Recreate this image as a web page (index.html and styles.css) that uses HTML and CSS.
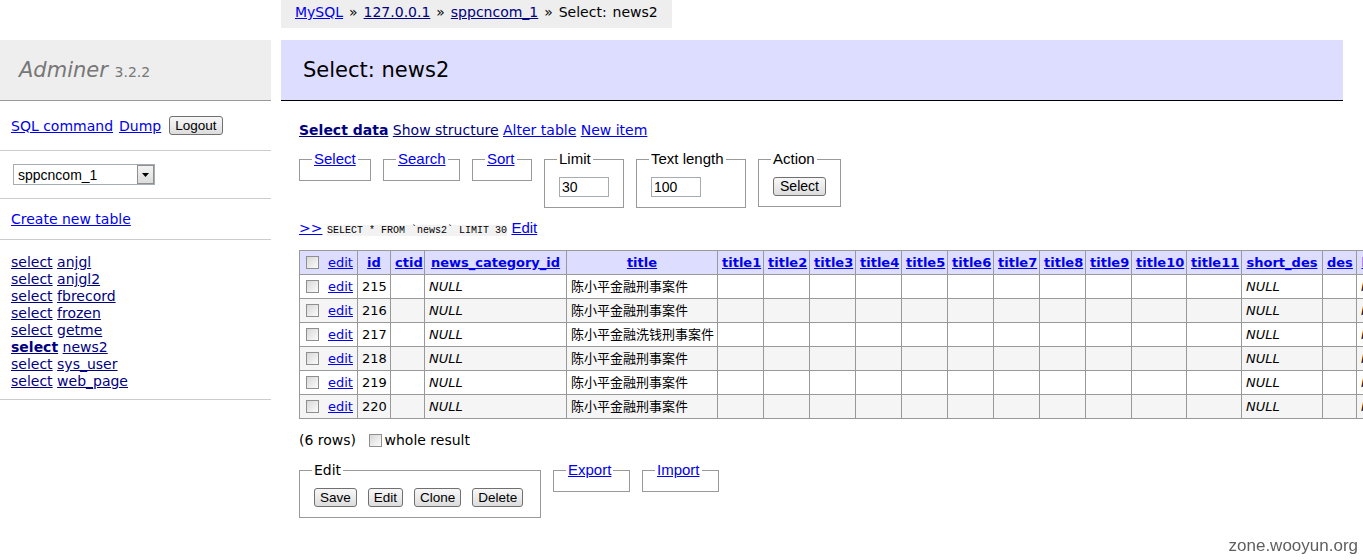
FILE: index.html
```html
<!DOCTYPE html>
<html lang="en">
<head>
<meta charset="utf-8">
<title>Select: news2 - Adminer</title>
<link rel="stylesheet" href="styles.css">
</head>
<body>
<nav class="menu">
  <h1 class="brand"><span class="brand-name">Adminer</span> <span class="version">3.2.2</span></h1>
  <p class="menu-sec links-row"><a href="#">SQL command</a><a href="#">Dump</a><button class="btn logout" type="button">Logout</button></p>
  <p class="menu-sec db-row"><span class="dbselect"><select class="dbselect-input"><option>sppcncom_1</option></select><span class="dbselect-arrow"><svg width="7" height="4" viewBox="0 0 7 4"><path d="M0 0h7L3.5 4z" fill="#000"/></svg></span></span></p>
  <p class="menu-sec"><a href="#">Create new table</a></p>
  <div class="menu-sec table-list">
    <div><a class="v" href="#">select</a> <a class="v" href="#">anjgl</a></div>
    <div><a class="v" href="#">select</a> <a class="v" href="#">anjgl2</a></div>
    <div><a class="v" href="#">select</a> <a class="v" href="#">fbrecord</a></div>
    <div><a class="v" href="#">select</a> <a class="v" href="#">frozen</a></div>
    <div><a class="v" href="#">select</a> <a class="v" href="#">getme</a></div>
    <div><a class="v active" href="#">select</a> <a class="v" href="#">news2</a></div>
    <div><a class="v" href="#">select</a> <a class="v" href="#">sys_user</a></div>
    <div><a class="v" href="#">select</a> <a class="v" href="#">web_page</a></div>
  </div>
</nav>

<main class="main">
  <p class="breadcrumb"><a href="#">MySQL</a> » <a class="v" href="#">127.0.0.1</a> » <a class="v" href="#">sppcncom_1</a> » Select: news2</p>
  <h1 class="page-title">Select: news2</h1>

  <div class="content">
    <p class="tabs"><a class="v current" href="#">Select data</a> <a class="v" href="#">Show structure</a> <a href="#">Alter table</a> <a href="#">New item</a></p>

    <div class="filters">
      <fieldset class="box w-select"><legend><a href="#">Select</a></legend></fieldset>
      <fieldset class="box w-search"><legend><a href="#">Search</a></legend></fieldset>
      <fieldset class="box w-sort"><legend><a href="#">Sort</a></legend></fieldset>
      <fieldset class="box w-limit"><legend>Limit</legend><div class="fs-body"><input class="num" type="text" value="30"></div></fieldset>
      <fieldset class="box w-textlen"><legend>Text length</legend><div class="fs-body"><input class="num" type="text" value="100"></div></fieldset>
      <fieldset class="box w-action"><legend>Action</legend><div class="fs-body"><button class="btn" type="button">Select</button></div></fieldset>
    </div>

    <p class="sql"><a href="#" class="sql-go">&gt;&gt;</a> <code class="sql-code">SELECT * FROM `news2` LIMIT 30</code> <a href="#" class="sql-edit">Edit</a></p>

    <table class="grid">
      <colgroup>
        <col class="c-chk"><col class="c-id"><col class="c-ctid"><col class="c-nci"><col class="c-title">
        <col class="c-t"><col class="c-t"><col class="c-t"><col class="c-t"><col class="c-t"><col class="c-t"><col class="c-t"><col class="c-t"><col class="c-t">
        <col class="c-t2"><col class="c-t2"><col class="c-short"><col class="c-des"><col class="c-extra"><col class="c-extra">
      </colgroup>
      <thead>
        <tr>
          <td class="chk-cell"><input type="checkbox" class="cb"><a href="#">edit</a></td>
          <th><a href="#">id</a></th>
          <th><a href="#">ctid</a></th>
          <th><a href="#">news_category_id</a></th>
          <th><a href="#">title</a></th>
          <th><a href="#">title1</a></th>
          <th><a href="#">title2</a></th>
          <th><a href="#">title3</a></th>
          <th><a href="#">title4</a></th>
          <th><a href="#">title5</a></th>
          <th><a href="#">title6</a></th>
          <th><a href="#">title7</a></th>
          <th><a href="#">title8</a></th>
          <th><a href="#">title9</a></th>
          <th><a href="#">title10</a></th>
          <th><a href="#">title11</a></th>
          <th><a href="#">short_des</a></th>
          <th><a href="#">des</a></th>
          <th><a href="#">keywords</a></th>
          <th><a href="#">content</a></th>
        </tr>
      </thead>
      <tbody>
        <tr>
          <td class="chk-cell"><input type="checkbox" class="cb"><a href="#">edit</a></td>
          <td>215</td><td></td><td><i>NULL</i></td><td>陈小平金融刑事案件</td>
          <td></td><td></td><td></td><td></td><td></td><td></td><td></td><td></td><td></td><td></td><td></td>
          <td><i>NULL</i></td><td></td><td><i>NULL</i></td><td><i>NULL</i></td>
        </tr>
        <tr class="odd">
          <td class="chk-cell"><input type="checkbox" class="cb"><a href="#">edit</a></td>
          <td>216</td><td></td><td><i>NULL</i></td><td>陈小平金融刑事案件</td>
          <td></td><td></td><td></td><td></td><td></td><td></td><td></td><td></td><td></td><td></td><td></td>
          <td><i>NULL</i></td><td></td><td><i>NULL</i></td><td><i>NULL</i></td>
        </tr>
        <tr>
          <td class="chk-cell"><input type="checkbox" class="cb"><a href="#">edit</a></td>
          <td>217</td><td></td><td><i>NULL</i></td><td>陈小平金融洗钱刑事案件</td>
          <td></td><td></td><td></td><td></td><td></td><td></td><td></td><td></td><td></td><td></td><td></td>
          <td><i>NULL</i></td><td></td><td><i>NULL</i></td><td><i>NULL</i></td>
        </tr>
        <tr class="odd">
          <td class="chk-cell"><input type="checkbox" class="cb"><a href="#">edit</a></td>
          <td>218</td><td></td><td><i>NULL</i></td><td>陈小平金融刑事案件</td>
          <td></td><td></td><td></td><td></td><td></td><td></td><td></td><td></td><td></td><td></td><td></td>
          <td><i>NULL</i></td><td></td><td><i>NULL</i></td><td><i>NULL</i></td>
        </tr>
        <tr>
          <td class="chk-cell"><input type="checkbox" class="cb"><a href="#">edit</a></td>
          <td>219</td><td></td><td><i>NULL</i></td><td>陈小平金融刑事案件</td>
          <td></td><td></td><td></td><td></td><td></td><td></td><td></td><td></td><td></td><td></td><td></td>
          <td><i>NULL</i></td><td></td><td><i>NULL</i></td><td><i>NULL</i></td>
        </tr>
        <tr class="odd">
          <td class="chk-cell"><input type="checkbox" class="cb"><a href="#">edit</a></td>
          <td>220</td><td></td><td><i>NULL</i></td><td>陈小平金融刑事案件</td>
          <td></td><td></td><td></td><td></td><td></td><td></td><td></td><td></td><td></td><td></td><td></td>
          <td><i>NULL</i></td><td></td><td><i>NULL</i></td><td><i>NULL</i></td>
        </tr>
      </tbody>
    </table>

    <p class="rows-line">(6 rows) <label class="whole"><input type="checkbox" class="cb cb-whole">whole result</label></p>

    <div class="actions">
      <fieldset class="box w-edit edit-fs"><legend>Edit</legend><div class="fs-body btn-row"><button class="btn" type="button">Save</button><button class="btn" type="button">Edit</button><button class="btn" type="button">Clone</button><button class="btn" type="button">Delete</button></div></fieldset>
      <fieldset class="box w-export"><legend><a href="#">Export</a></legend></fieldset>
      <fieldset class="box w-import"><legend><a href="#">Import</a></legend></fieldset>
    </div>
  </div>
</main>

<div class="watermark">zone.wooyun.org</div>
</body>
</html>
```

FILE: styles.css
```css
html {
  overflow: hidden;
}

body {
  margin: 0;
  font: 14px/18px "DejaVu Sans", Verdana, "Noto Sans CJK SC", sans-serif;
  color: #000;
  background: #fff;
  display: flex;
  align-items: flex-start;
}

a {
  color: #0000ee;
}

a.v {
  color: #000080;
}

/* ---------- sidebar ---------- */
.menu {
  width: 271px;
  flex: none;
  margin-top: 40px;
}

.brand {
  margin: 0;
  padding: 17px 19px;
  height: 26px;
  background: #eee;
  border-bottom: 1px solid #999;
  font: italic 21px/26px "DejaVu Sans", Verdana, sans-serif;
  color: #777;
}

.version {
  font-style: normal;
  font-size: 14px;
  line-height: 14px;
  color: #777;
}

.menu-sec {
  margin: 0;
  padding: 11px;
  border-bottom: 1px solid #ccc;
}

.links-row {
  display: flex;
  align-items: center;
  gap: 6px;
  height: 27px;
}

.links-row .logout {
  margin-left: 2px;
}

.db-row {
  display: flex;
  align-items: center;
  height: 25px;
}

.dbselect {
  display: flex;
  align-items: stretch;
  width: 142px;
  height: 21px;
  box-sizing: border-box;
  border: 1px solid #a5acb2;
  margin-left: 2px;
  background: #fff;
}

.dbselect-input {
  appearance: none;
  -webkit-appearance: none;
  border: 0;
  outline: 0;
  background: transparent;
  flex: 1;
  min-width: 0;
  padding: 0 4px;
  font: 14px "Liberation Sans", Arial, sans-serif;
  color: #000;
}

.dbselect-arrow {
  flex: none;
  width: 17px;
  box-sizing: border-box;
  border: 1px solid #8e8f8f;
  background: linear-gradient(#f3f3f3, #dcdcdc);
  display: flex;
  align-items: center;
  justify-content: center;
}

.table-list {
  line-height: 17px;
  padding-top: 14px;
  padding-bottom: 9px;
}

.table-list .active {
  font-weight: bold;
}

/* ---------- main ---------- */
.main {
  flex: 1;
  min-width: 0;
  margin-left: 10px;
  padding-right: 20px;
  display: flex;
  flex-direction: column;
}

.breadcrumb {
  align-self: flex-start;
  margin: 0;
  height: 28px;
  line-height: 25px;
  padding: 0 14px;
  word-spacing: 1.5px;
  background: #eee;
}

.page-title {
  margin: 12px 0 0;
  padding: 17px 22px;
  height: 26px;
  background: #ddf;
  border-bottom: 1px solid #000;
  font: normal 21px/26px "DejaVu Sans", Verdana, sans-serif;
}

.content {
  padding-left: 18px;
}

.tabs {
  margin: 20px 0 0;
}

.tabs .current {
  font-weight: bold;
}

/* ---------- fieldsets ---------- */
.filters,
.actions {
  display: flex;
  align-items: flex-start;
  gap: 12px;
}

.filters {
  margin-top: 11px;
}

.actions {
  margin-top: 12px;
}

.box {
  margin: 0;
  padding: 0 12px 6px;
  border: 1px solid #999;
  box-sizing: border-box;
  min-width: 0;
}

.box legend {
  padding: 0 2px;
  font: 15px/18px "Liberation Sans", Arial, sans-serif;
  height: 18px;
}

.edit-fs legend {
  font: 14px/18px "DejaVu Sans", Verdana, sans-serif;
}

.box:not(:has(.fs-body)) {
  padding-top: 6px;
}

.fs-body {
  padding: 9px 2px 4px;
}

.w-select { width: 72px; }
.w-search { width: 77px; }
.w-sort { width: 60px; }
.w-limit { width: 80px; }
.w-textlen { width: 110px; }
.w-action { width: 83px; }
.w-edit { width: 242px; }
.w-export { width: 77px; }
.w-import { width: 77px; }

.num {
  display: block;
  width: 50px;
  height: 20px;
  box-sizing: border-box;
  margin: 0;
  padding: 0 2px;
  border: 1px solid #a5acb2;
  font: 14px "Liberation Sans", Arial, sans-serif;
  color: #000;
}

.btn {
  height: 19px;
  margin: 0;
  padding: 0 5px;
  border: 1px solid #707070;
  border-radius: 3px;
  background: linear-gradient(#f7f7f7 0%, #ebebeb 50%, #dcdcdc 100%);
  font: 13.5px/17px "Liberation Sans", Arial, sans-serif;
  color: #000;
  display: inline-block;
}

.w-action .btn {
  display: block;
  width: 53px;
  font-size: 14px;
}

.btn-row {
  display: flex;
  gap: 11px;
}

/* ---------- sql line ---------- */
.sql {
  margin: 11px 0 0;
}

.sql-code {
  font: 10px "Liberation Mono", "Courier New", monospace;
  background: #f2f2f2;
  color: #000;
}

.sql-edit {
  font: 15px "Liberation Sans", Arial, sans-serif;
}

/* ---------- grid ---------- */
.grid {
  margin-top: 13px;
  table-layout: fixed;
  width: 1218px;
  border-collapse: separate;
  border-spacing: 0;
  border-top: 1px solid #999;
  border-left: 1px solid #999;
  font: 13px/18px "DejaVu Sans", Verdana, "Noto Sans CJK SC", sans-serif;
}

.c-chk { width: 58px; }
.c-id { width: 33px; }
.c-ctid { width: 34px; }
.c-nci { width: 142px; }
.c-title { width: 151px; }
.c-t { width: 46px; }
.c-t2 { width: 55px; }
.c-short { width: 81px; }
.c-des { width: 34px; }
.c-extra { width: 80px; }

.grid th,
.grid td {
  border-right: 1px solid #999;
  border-bottom: 1px solid #999;
  padding: 3px 4px 2px;
  white-space: nowrap;
  overflow: hidden;
  text-align: left;
  vertical-align: middle;
}

.grid thead th,
.grid thead td {
  background: #ddf;
  text-align: center;
}

.grid thead .chk-cell {
  text-align: left;
}

.grid tr.odd td {
  background: #f5f5f5;
}

.grid .chk-cell {
  padding-left: 6px;
}

.cb {
  appearance: none;
  -webkit-appearance: none;
  width: 13px;
  height: 13px;
  margin: 0 9px 0 0;
  border: 1px solid #8f8f8f;
  background: linear-gradient(135deg, #d8d8d8, #fbfbfb);
  vertical-align: -2px;
  box-sizing: border-box;
}

/* ---------- footer ---------- */
.rows-line {
  margin: 12px 0 0;
}

.whole {
  margin-left: 8px;
}

.cb-whole {
  margin-right: 3px;
}

.watermark {
  position: fixed;
  right: 5px;
  bottom: 4px;
  font: 17px/20px "Liberation Sans", Arial, sans-serif;
  color: #5f5f5f;
}
```
